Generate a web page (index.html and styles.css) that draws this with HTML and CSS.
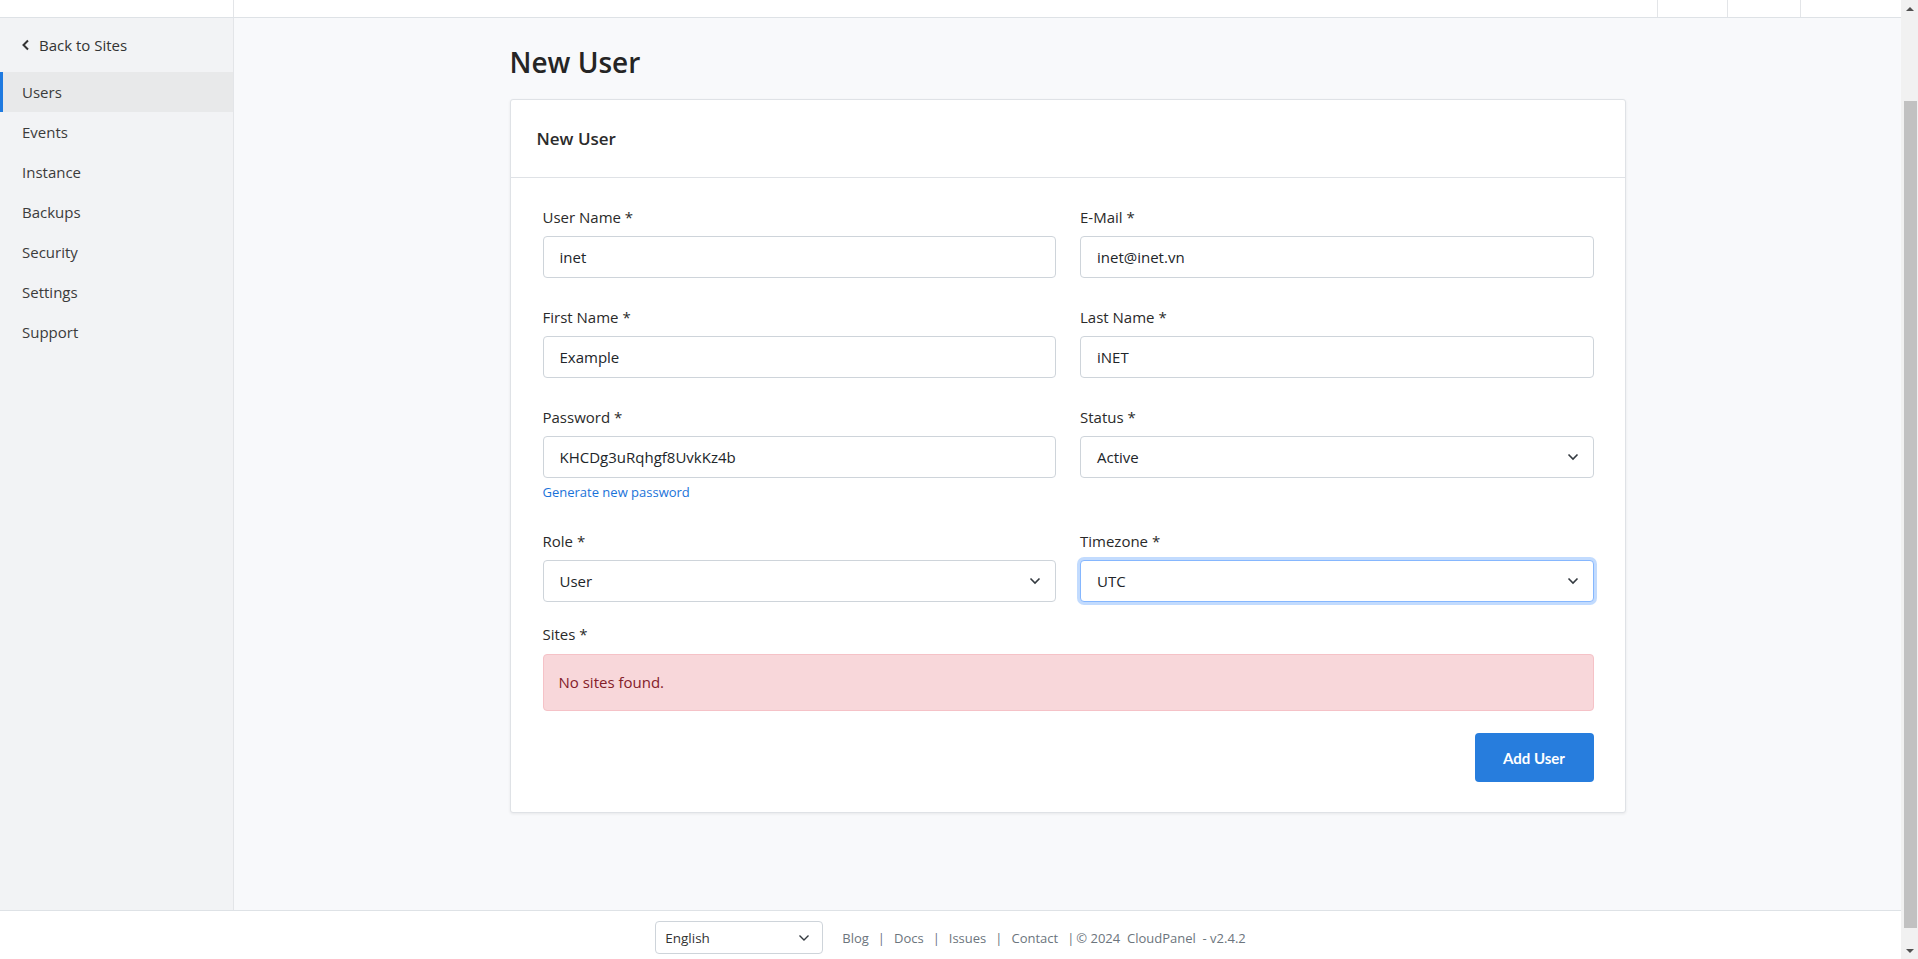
FILE: index.html
```html
<!DOCTYPE html>
<html lang="en">
<head>
<meta charset="utf-8">
<title>New User - CloudPanel</title>
<link rel="stylesheet" href="styles.css">
</head>
<body>
<div class="window">
  <div class="page">
    <header class="topbar">
      <div class="topbar-side"></div>
      <div class="topbar-fill"></div>
      <div class="topbar-item w70"></div>
      <div class="topbar-item w73"></div>
      <div class="topbar-item w101"></div>
    </header>
    <div class="body-row">
      <aside class="sidebar">
        <a class="back-link" href="#">
          <svg class="back-icon" width="10" height="12" viewBox="0 0 10 12"><path d="M7 1.5 2.5 6 7 10.5" fill="none" stroke="#333" stroke-width="2"/></svg>
          <span>Back to Sites</span>
        </a>
        <nav class="side-nav">
          <a class="side-item active" href="#">Users</a>
          <a class="side-item" href="#">Events</a>
          <a class="side-item" href="#">Instance</a>
          <a class="side-item" href="#">Backups</a>
          <a class="side-item" href="#">Security</a>
          <a class="side-item" href="#">Settings</a>
          <a class="side-item" href="#">Support</a>
        </nav>
      </aside>
      <main class="main">
        <div class="container">
          <h1 class="page-title">New User</h1>
          <section class="card">
            <div class="card-header">New User</div>
            <div class="card-body">
              <div class="form-grid">
                <div class="field">
                  <label class="label">User Name *</label>
                  <div class="control">inet</div>
                </div>
                <div class="field">
                  <label class="label">E-Mail *</label>
                  <div class="control">inet@inet.vn</div>
                </div>
                <div class="field">
                  <label class="label">First Name *</label>
                  <div class="control">Example</div>
                </div>
                <div class="field">
                  <label class="label">Last Name *</label>
                  <div class="control">iNET</div>
                </div>
                <div class="field">
                  <label class="label">Password *</label>
                  <div class="control">KHCDg3uRqhgf8UvkKz4b</div>
                  <a class="gen-link" href="#">Generate new password</a>
                </div>
                <div class="field">
                  <label class="label">Status *</label>
                  <div class="control select">
                    <span>Active</span>
                    <svg class="chev" width="12" height="8" viewBox="0 0 12 8"><path d="M1.5 1.5 6 6 10.5 1.5" fill="none" stroke="#343a40" stroke-width="1.6"/></svg>
                  </div>
                </div>
                <div class="field">
                  <label class="label">Role *</label>
                  <div class="control select">
                    <span>User</span>
                    <svg class="chev" width="12" height="8" viewBox="0 0 12 8"><path d="M1.5 1.5 6 6 10.5 1.5" fill="none" stroke="#343a40" stroke-width="1.6"/></svg>
                  </div>
                </div>
                <div class="field">
                  <label class="label">Timezone *</label>
                  <div class="control select focused">
                    <span>UTC</span>
                    <svg class="chev" width="12" height="8" viewBox="0 0 12 8"><path d="M1.5 1.5 6 6 10.5 1.5" fill="none" stroke="#343a40" stroke-width="1.6"/></svg>
                  </div>
                </div>
              </div>
              <div class="sites">
                <label class="label sites-label">Sites *</label>
                <div class="alert">No sites found.</div>
              </div>
              <div class="actions">
                <button class="btn-primary" type="button">Add User</button>
              </div>
            </div>
          </section>
        </div>
      </main>
    </div>
    <footer class="footer">
      <div class="lang-select">
        <span>English</span>
        <svg class="chev" width="12" height="8" viewBox="0 0 12 8"><path d="M1.5 1.5 6 6 10.5 1.5" fill="none" stroke="#343a40" stroke-width="1.4"/></svg>
      </div>
      <div class="footer-links">
        <a href="#">Blog</a><span class="sep">|</span><a href="#">Docs</a><span class="sep">|</span><a href="#">Issues</a><span class="sep">|</span><a href="#">Contact</a><span class="sep sep-tight">|</span><span>© 2024&nbsp; CloudPanel &nbsp;- v2.4.2</span>
      </div>
    </footer>
  </div>
  <div class="scrollbar">
    <div class="sb-btn"><span class="tri-up"></span></div>
    <div class="sb-track"><div class="sb-thumb"></div></div>
    <div class="sb-btn"><span class="tri-down"></span></div>
  </div>
</div>
</body>
</html>
```

FILE: styles.css
```css
* { box-sizing: border-box; }
html, body { margin: 0; padding: 0; }
body {
  font-family: "Open Sans", "Noto Sans", sans-serif;
  color: #212529;
  background: #f8f9fb;
}
a { text-decoration: none; color: inherit; }

.window {
  display: flex;
  width: 1918px;
  height: 959px;
  overflow: hidden;
}
.page {
  flex: 1;
  display: flex;
  flex-direction: column;
  min-width: 0;
}

/* top bar (scrolled, partially visible) */
.topbar {
  height: 18px;
  flex: none;
  display: flex;
  background: #fff;
  border-bottom: 1px solid #dee2e6;
}
.topbar-side { width: 234px; border-right: 1px solid #e3e5e8; }
.topbar-fill { flex: 1; }
.topbar-item { border-left: 1px solid #e3e5e8; }
.w70 { width: 70px; }
.w73 { width: 73px; }
.w101 { width: 101px; }

.body-row {
  flex: 1;
  display: flex;
  min-height: 0;
}

/* sidebar */
.sidebar {
  width: 234px;
  flex: none;
  background: #f2f3f5;
  border-right: 1px solid #e3e5e8;
  padding-top: 7px;
}
.back-link {
  display: flex;
  align-items: center;
  height: 40px;
  padding-left: 21px;
  gap: 8px;
  font-size: 15px;
  color: #333;
  margin-bottom: 7px;
}
.side-nav { display: flex; flex-direction: column; }
.side-item {
  display: flex;
  align-items: center;
  height: 40px;
  font-size: 15px;
  color: #3b3b3b;
  border-left: 3px solid transparent;
  padding-left: 19px;
}
.side-item.active {
  background: #e8e9ea;
  border-left-color: #1f7ae0;
}

/* main */
.main {
  flex: 1;
  min-width: 0;
  background: #f8f9fb;
}
.container {
  max-width: 1140px;
  margin: 0 auto;
  padding: 27px 12px 0;
}
.page-title {
  margin: 0 0 19px;
  font-size: 28px;
  line-height: 35px;
  font-weight: 600;
  color: #252525;
}
.card {
  background: #fff;
  border: 1px solid #dfe2e6;
  border-radius: 3px;
  box-shadow: 0 1px 3px rgba(0, 0, 0, 0.07);
}
.card-header {
  padding: 27px 26px 26px;
  font-size: 17px;
  line-height: 24px;
  font-weight: 600;
  color: #2b2b2b;
  border-bottom: 1px solid #dfe2e6;
}
.card-body {
  padding: 27px 31px 30px 32px;
}
.form-grid {
  display: grid;
  grid-template-columns: 1fr 1fr;
  column-gap: 24px;
  row-gap: 27px;
}
.field { display: flex; flex-direction: column; align-items: flex-start; }
.label {
  display: block;
  font-size: 15px;
  line-height: 24px;
  color: #2a2a2a;
  margin-bottom: 7px;
}
.control {
  width: 100%;
  height: 42px;
  display: flex;
  align-items: center;
  padding: 0 16px;
  border: 1px solid #ced4da;
  border-radius: 4px;
  background: #fff;
  font-size: 15px;
  color: #212529;
}
.select { justify-content: space-between; padding-right: 14px; }
.focused {
  border-color: #86b7fe;
  box-shadow: 0 0 0 3px rgba(13, 110, 253, 0.25);
}
.chev { flex: none; }
.gen-link {
  margin-top: 4px;
  font-size: 13px;
  line-height: 20px;
  color: #1a73d9;
}
.sites { margin-top: 20px; }
.sites-label { margin-bottom: 8px; }
.alert {
  padding: 16px 15px;
  line-height: 23px;
  font-size: 15px;
  color: #842029;
  background: #f8d7da;
  border: 1px solid #f5c2c7;
  border-radius: 4px;
}
.actions {
  display: flex;
  justify-content: flex-end;
  margin-top: 22px;
}
.btn-primary {
  width: 119px;
  height: 49px;
  border: 0;
  border-radius: 4px;
  background: #277ddd;
  color: #fff;
  font-family: "Lato", "Open Sans", sans-serif;
  font-weight: 700;
  font-size: 15px;
}

/* footer */
.footer {
  height: 49px;
  flex: none;
  background: #fff;
  border-top: 1px solid #dee2e6;
  display: flex;
  align-items: center;
  justify-content: center;
  gap: 19px;
  padding-top: 5px;
}
.lang-select {
  width: 168px;
  height: 33px;
  border: 1px solid #ced4da;
  border-radius: 4px;
  display: flex;
  align-items: center;
  justify-content: space-between;
  padding: 0 12px 0 9px;
  font-size: 13.5px;
  color: #333;
}
.footer-links {
  font-size: 13px;
  color: #6c757d;
}
.sep { margin: 0 9px; }
.sep-tight { margin-right: 2px; }

/* fake scrollbar */
.scrollbar {
  width: 17px;
  flex: none;
  background: #f1f1f1;
  display: flex;
  flex-direction: column;
}
.sb-btn {
  height: 17px;
  display: flex;
  align-items: center;
  justify-content: center;
}
.sb-track {
  flex: 1;
  padding: 84px 0 14px 3px;
}
.sb-thumb {
  width: 13px;
  height: 100%;
  background: #c1c1c1;
}
.tri-up, .tri-down {
  width: 0; height: 0;
  border-left: 4px solid transparent;
  border-right: 4px solid transparent;
}
.tri-up { border-bottom: 4px solid #505050; }
.tri-down { border-top: 4px solid #505050; }
```
